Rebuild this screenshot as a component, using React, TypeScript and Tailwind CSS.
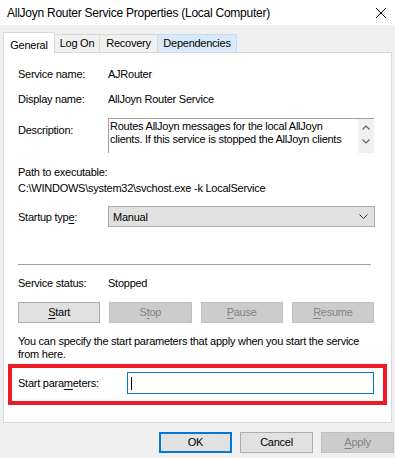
import React from "react";

const U = ({ children }: { children: React.ReactNode }) => <span className="underline underline-offset-[2px]">{children}</span>;

function Btn({ children, disabled, primary, className = "" }: { children: React.ReactNode; disabled?: boolean; primary?: boolean; className?: string }) {
  const base = "flex items-center justify-center text-[11px] leading-none";
  const st = disabled
    ? "bg-[#cccccc] border border-[#bfbfbf] text-[#838383]"
    : primary
    ? "bg-[#e1e1e1] border-2 border-[#0078d7] text-black"
    : "bg-[#e1e1e1] border border-[#adadad] text-black";
  return <div className={`${base} ${st} ${className}`}>{children}</div>;
}

export default function App() {
  return (
    <div className="w-[395px] h-[458px] bg-[#f0f0f0] text-black overflow-hidden tracking-[-0.25px]" style={{ fontFamily: '"Liberation Sans", Arial, sans-serif' }}>
      {/* Title bar */}
      <div className="h-[25px] bg-white flex items-center justify-between pl-[7px] pr-[4px]">
        <span className="text-[12px] leading-none">AllJoyn Router Service Properties (Local Computer)</span>
        <svg width="12" height="12" viewBox="0 0 12 12" className="mr-[4px]">
          <path d="M1 1 L11 11 M11 1 L1 11" stroke="#000" strokeWidth="1" />
        </svg>
      </div>

      {/* Tabs */}
      <div className="mt-[7px] ml-[3px] flex items-end h-[20px] relative z-10 text-[11px]">
        <div className="w-[52px] h-[21px] bg-white border border-b-0 border-[#d9d9d9] flex items-start justify-center pt-[4px] -mb-px">General</div>
        <div className="w-[45px] h-[18px] border border-l-0 border-b-0 border-[#d9d9d9] flex items-center justify-center">Log On</div>
        <div className="w-[58px] h-[18px] border border-l-0 border-b-0 border-[#d9d9d9] flex items-center justify-center">Recovery</div>
        <div className="w-[79px] h-[18px] bg-[#d8eaf9] border border-l-0 border-b-0 border-[#c4dcf2] flex items-center justify-center">Dependencies</div>
      </div>

      {/* Panel */}
      <div className="ml-[3px] w-[389px] h-[371px] bg-white border border-[#d9d9d9] pl-[14px] pr-[16px] text-[11px] leading-[16px] whitespace-nowrap">
        <div className="mt-[13px] flex h-[16px]">
          <div className="w-[90px]">Service name:</div>
          <div>AJRouter</div>
        </div>
        <div className="mt-[9px] flex h-[16px]">
          <div className="w-[90px]">Display name:</div>
          <div>AllJoyn Router Service</div>
        </div>
        <div className="mt-[11px] flex h-[35px]">
          <div className="w-[90px] pt-[4px]">Description:</div>
          <div className="w-[266px] h-[35px] border-t border-l border-[#a0a0a0] flex">
            <div className="flex-1 pl-[1px] pt-[1px] leading-[13px] overflow-hidden">
              <div>Routes AllJoyn messages for the local AllJoyn</div>
              <div>clients. If this service is stopped the AllJoyn clients</div>
            </div>
            <div className="w-[16px] bg-[#f0f0f0] flex flex-col items-center pt-[6px] gap-[9px]">
              <svg width="8" height="5" viewBox="0 0 8 5"><path d="M0.5 4.5 L4 1 L7.5 4.5" stroke="#606060" fill="none" strokeWidth="1.2" /></svg>
              <svg width="8" height="5" viewBox="0 0 8 5"><path d="M0.5 0.5 L4 4 L7.5 0.5" stroke="#606060" fill="none" strokeWidth="1.2" /></svg>
            </div>
          </div>
        </div>
        <div className="mt-[11px] h-[16px]">Path to executable:</div>
        <div className="h-[16px]">C:\WINDOWS\system32\svchost.exe -k LocalService</div>
        <div className="mt-[10px] flex items-center h-[21px]">
          <div className="w-[90px]">Startup typ<U>e</U>:</div>
          <div className="w-[267px] h-[21px] bg-[#e1e1e1] border border-[#adadad] flex items-center justify-between pl-[4px] pr-[6px]">
            <span>Manual</span>
            <svg width="9" height="5" viewBox="0 0 9 5"><path d="M0.5 0.5 L4.5 4.5 L8.5 0.5" stroke="#333" fill="none" strokeWidth="1" /></svg>
          </div>
        </div>
        <div className="mt-[37px] h-px w-[353px] bg-[#a0a0a0]" />
        <div className="mt-[10px] flex h-[16px]">
          <div className="w-[90px]">Service status:</div>
          <div>Stopped</div>
        </div>
        <div className="mt-[11px] grid grid-cols-4 gap-[9px] w-[356px] h-[21px]">
          <Btn><U>S</U>tart</Btn>
          <Btn disabled>S<U>t</U>op</Btn>
          <Btn disabled><U>P</U>ause</Btn>
          <Btn disabled><U>R</U>esume</Btn>
        </div>
        <div className="mt-[12px] leading-[13px]">
          <div>You can specify the start parameters that apply when you start the service</div>
          <div>from here.</div>
        </div>
        <div className="mt-[3px] -ml-[10px] w-[379px] border-[4px] border-[#ed1c24] pl-[6px] pt-[4px] pb-[7px] flex items-center">
          <div className="w-[109px]">Start para<U>m</U>eters:</div>
          <div className="w-[247px] h-[22px] border border-[#0078d7] bg-white flex items-center pl-[3px]">
            <div className="w-px h-[13px] bg-black" />
          </div>
        </div>
      </div>

      {/* Bottom buttons */}
      <div className="mt-[9px] flex justify-end gap-[8px] pr-[1px]">
        <Btn primary className="w-[73px] h-[21px]">OK</Btn>
        <Btn className="w-[73px] h-[21px]">Cancel</Btn>
        <Btn disabled className="w-[73px] h-[21px]"><U>A</U>pply</Btn>
      </div>
    </div>
  );
}
